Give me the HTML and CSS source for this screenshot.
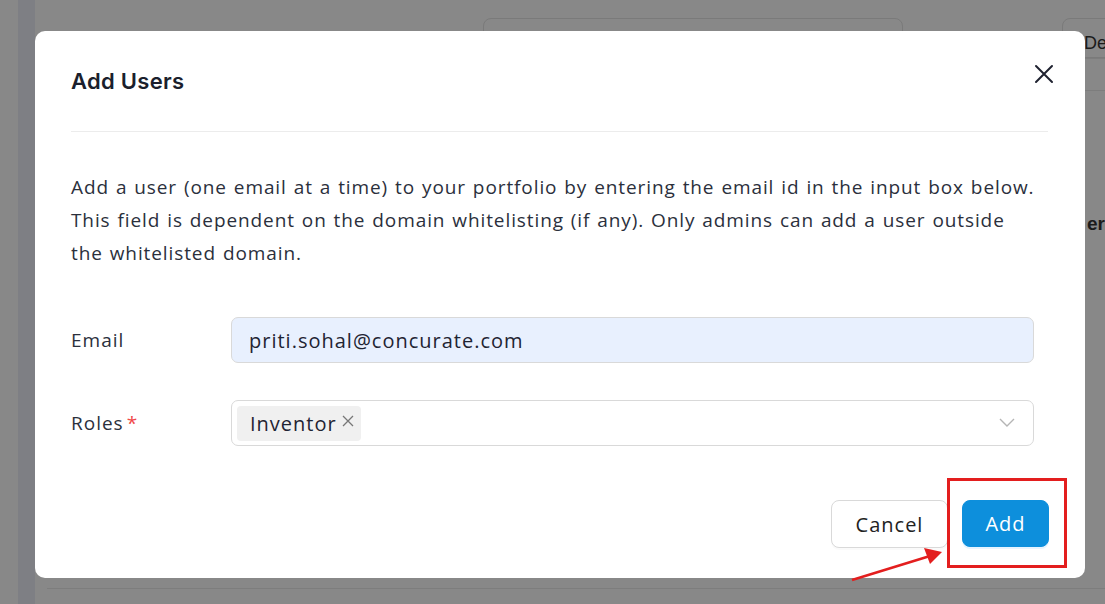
FILE: index.html
```html
<!DOCTYPE html>
<html lang="en">
<head>
<meta charset="utf-8">
<title>Add Users</title>
<link rel="stylesheet" href="styles.css">
</head>
<body>
<div class="page">
  <div class="sidebar"></div>
  <div class="content">
    <div class="toolbar">
      <div class="search-box"></div>
      <div class="side-btn">De</div>
    </div>
    <div class="row-line"></div>
    <div class="row-line second"></div>
    <div class="col-head">er</div>
    <div class="grid-bottom"></div>
  </div>
</div>

<div class="modal">
  <div class="modal-head">
    <h2 class="modal-title">Add Users</h2>
    <button class="close" aria-label="Close">
      <svg width="20" height="20" viewBox="0 0 20 20"><path d="M2 2 L18 18 M18 2 L2 18" stroke="#1f2230" stroke-width="2" stroke-linecap="round"/></svg>
    </button>
  </div>
  <div class="divider"></div>
  <p class="desc">Add a user (one email at a time) to your portfolio by entering the email id in the input box below. This field is dependent on the domain whitelisting (if any). Only admins can add a user outside the whitelisted domain.</p>

  <div class="field">
    <label class="label">Email</label>
    <div class="input filled">priti.sohal@concurate.com</div>
  </div>
  <div class="field roles">
    <label class="label">Roles<span class="req">*</span></label>
    <div class="input select">
      <span class="tag">Inventor<svg class="tag-x" width="12" height="12" viewBox="0 0 12 12"><path d="M1 1 L11 11 M11 1 L1 11" stroke="#777" stroke-width="1.3"/></svg></span>
      <svg class="chev" width="16" height="10" viewBox="0 0 16 10"><path d="M1 1 L8 8 L15 1" fill="none" stroke="#b5b5b5" stroke-width="1.4"/></svg>
    </div>
  </div>

  <div class="footer">
    <button class="btn cancel">Cancel</button>
    <button class="btn primary">Add</button>
  </div>
</div>

<div class="highlight"></div>
<svg class="arrow" width="110" height="40" viewBox="0 0 110 40">
  <path d="M2 37 L80 13" stroke="#e31e1e" stroke-width="2.6"/>
  <path d="M92 9 L74 5 L80 21 Z" fill="#e31e1e"/>
</svg>
</body>
</html>
```
FILE: styles.css
```css
* { box-sizing: border-box; }
html, body { margin: 0; padding: 0; }
body {
  width: 1105px;
  height: 604px;
  overflow: hidden;
  background: #888888;
  font-family: "Open Sans", "Noto Sans", sans-serif;
  position: relative;
}
.page {
  display: flex;
  height: 604px;
}
.sidebar {
  flex: 0 0 17px;
  margin-left: 18px;
  background: #7e7f84;
}
.content {
  flex: 1;
  min-width: 0;
  position: relative;
}
.toolbar {
  display: flex;
  padding-top: 18px;
  padding-left: 448px;
  gap: 159px;
}
.search-box {
  flex: 0 0 420px;
  height: 40px;
  border: 1px solid #7a7a7a;
  border-radius: 8px;
}
.side-btn {
  flex: 0 0 80px;
  height: 40px;
  border: 1px solid #7a7a7a;
  border-radius: 8px;
  padding: 14px 0 0 21px;
  font-size: 18px;
  color: #1b1b1b;
  font-family: "Liberation Sans", sans-serif;
}
.row-line { height: 1px; background: #7d7d7d; margin-top: 0; }
.row-line.second { margin-top: 31px; }
.col-head {
  position: absolute;
  left: 1052px;
  top: 213px;
  font-family: "Liberation Sans", sans-serif;
  font-size: 19px;
  font-weight: bold;
  color: #1b1b1b;
}
.grid-bottom {
  position: absolute;
  left: 12px; right: 0;
  top: 588px;
  height: 1px;
  background: #7d7d7d;
}

.modal {
  position: absolute;
  left: 35px;
  top: 31px;
  width: 1050px;
  height: 547px;
  background: #ffffff;
  border-radius: 10px;
  padding: 0 36px;
  color: #1f2433;
}
.modal-head {
  display: flex;
  justify-content: space-between;
  align-items: flex-start;
  padding-top: 37px;
}
.modal-title {
  margin: 0;
  font-family: "Inter", sans-serif;
  font-size: 22px;
  font-weight: 600;
  color: #1b1f2d;
  letter-spacing: 0.3px;
}
.close {
  border: 0;
  background: none;
  padding: 0;
  margin-top: -4px;
  margin-right: -5px;
  width: 20px;
  height: 20px;
}
.divider {
  height: 1px;
  background: #ececec;
  margin-top: 37px;
  margin-right: 1px;
}
.desc {
  margin: 39px 0 0;
  padding-right: 10px;
  font-size: 19px;
  line-height: 33px;
  color: #2b303c;
  letter-spacing: 0.9px;
  word-spacing: 1.1px;
}
.field {
  display: flex;
  align-items: center;
  margin-top: 47px;
  padding-right: 15px;
}
.field.roles { margin-top: 37px; }
.label {
  width: 160px;
  font-size: 19px;
  color: #2b303c;
  letter-spacing: 1px;
}
.req { color: #f04848; margin-left: 3px; }
.input {
  flex: 1;
  height: 46px;
  border: 1px solid #d9d9d9;
  border-radius: 7px;
  display: flex;
  align-items: center;
  padding: 0 17px;
  font-size: 20px;
  color: #1f2433;
  letter-spacing: 1px;
}
.input.filled { background: #e8f0fe; }
.input.select {
  padding: 0 5px;
  justify-content: space-between;
}
.tag {
  display: inline-flex;
  align-items: center;
  height: 35px;
  background: #f0f0f0;
  border-radius: 4px;
  padding: 0 7px 0 13px;
  font-size: 20px;
  color: #1f2433;
  gap: 5px;
}
.tag-x { margin-top: -5px; }
.chev { margin-right: 13px; }
.footer {
  display: flex;
  justify-content: flex-end;
  gap: 14px;
  margin-top: 54px;
}
.btn {
  font-family: "Open Sans", "Noto Sans", sans-serif;
  font-size: 20px;
  letter-spacing: 1px;
  height: 48px;
  border-radius: 8px;
  cursor: pointer;
}
.cancel {
  width: 117px;
  background: #ffffff;
  border: 1px solid #d9d9d9;
  color: #222;
  box-shadow: 0 2px 0 rgba(0,0,0,0.02);
}
.primary {
  width: 87px;
  height: 47px;
  background: #0d8fdc;
  border: 1px solid #0d8fdc;
  color: #ffffff;
  box-shadow: 0 2px 0 rgba(5,145,255,0.1);
}
.highlight {
  position: absolute;
  left: 947px;
  top: 478px;
  width: 120px;
  height: 90px;
  border: 3px solid #e31e1e;
}
.arrow {
  position: absolute;
  left: 850px;
  top: 543px;
}
```
